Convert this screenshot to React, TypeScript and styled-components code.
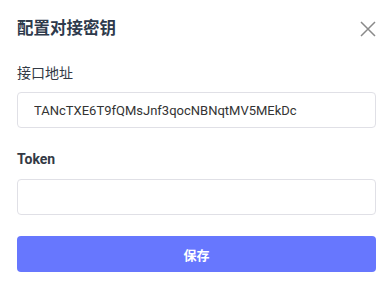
import styled, { createGlobalStyle } from "styled-components";

const GlobalStyle = createGlobalStyle`
	body {
		margin: 0;
		background: #fff;
		font-family: Roboto, "Noto Sans CJK SC", sans-serif;
	}
`;

const Dialog = styled.div`
	width: 392px;
	box-sizing: border-box;
	padding: 17px 16px 0 17px;
	display: flex;
	flex-direction: column;
`;

const Header = styled.div`
	display: flex;
	align-items: center;
	justify-content: space-between;
	height: 24px;
	margin-bottom: 22px;
`;

const Title = styled.h2`
	margin: 0;
	font-size: 16.5px;
	line-height: 24px;
	font-weight: 700;
	color: #2e3a4c;
`;

const CloseButton = styled.button`
	border: none;
	background: none;
	padding: 0;
	margin-right: -2px;
	width: 20px;
	height: 20px;
	display: flex;
	align-items: center;
	justify-content: center;
	cursor: pointer;
`;

const Field = styled.div`
	display: flex;
	flex-direction: column;
	margin-bottom: 21px;
`;

const Label = styled.label<{ $bold?: boolean }>`
	font-size: 14px;
	line-height: 20px;
	color: #333a45;
	font-weight: ${p => (p.$bold ? 700 : 400)};
	margin-bottom: ${p => (p.$bold ? 10 : 9)}px;
`;

const InputBox = styled.div`
	height: 36px;
	box-sizing: border-box;
	border: 1px solid #e0e0e6;
	border-radius: 4px;
	padding-left: 16px;
	padding-right: 16px;
	display: flex;
	align-items: center;
`;

const Input = styled.input`
	flex: 1;
	min-width: 0;
	border: none;
	padding: 0;
	background: transparent;
	font-family: Roboto, sans-serif;
	font-size: 13px;
	color: #333;
	outline: none;
`;

const SaveButton = styled.button`
	height: 36px;
	border: none;
	border-radius: 4px;
	background: #6777fe;
	color: #fff;
	font-family: "Noto Sans CJK SC", sans-serif;
	font-size: 13px;
	font-weight: 700;
	cursor: pointer;
`;

function App() {
	return (
		<>
			<GlobalStyle />
			<Dialog>
				<Header>
					<Title>配置对接密钥</Title>
					<CloseButton aria-label="close">
						<svg width="16" height="16" viewBox="0 0 16 16">
							<path d="M1 1L15 15M15 1L1 15" stroke="#8a8a8a" strokeWidth="1.5" />
						</svg>
					</CloseButton>
				</Header>
				<Field>
					<Label>接口地址</Label>
					<InputBox>
						<Input defaultValue="TANcTXE6T9fQMsJnf3qocNBNqtMV5MEkDc" />
					</InputBox>
				</Field>
				<Field>
					<Label $bold>Token</Label>
					<InputBox>
						<Input />
					</InputBox>
				</Field>
				<SaveButton>保存</SaveButton>
			</Dialog>
		</>
	);
}

export default App;
